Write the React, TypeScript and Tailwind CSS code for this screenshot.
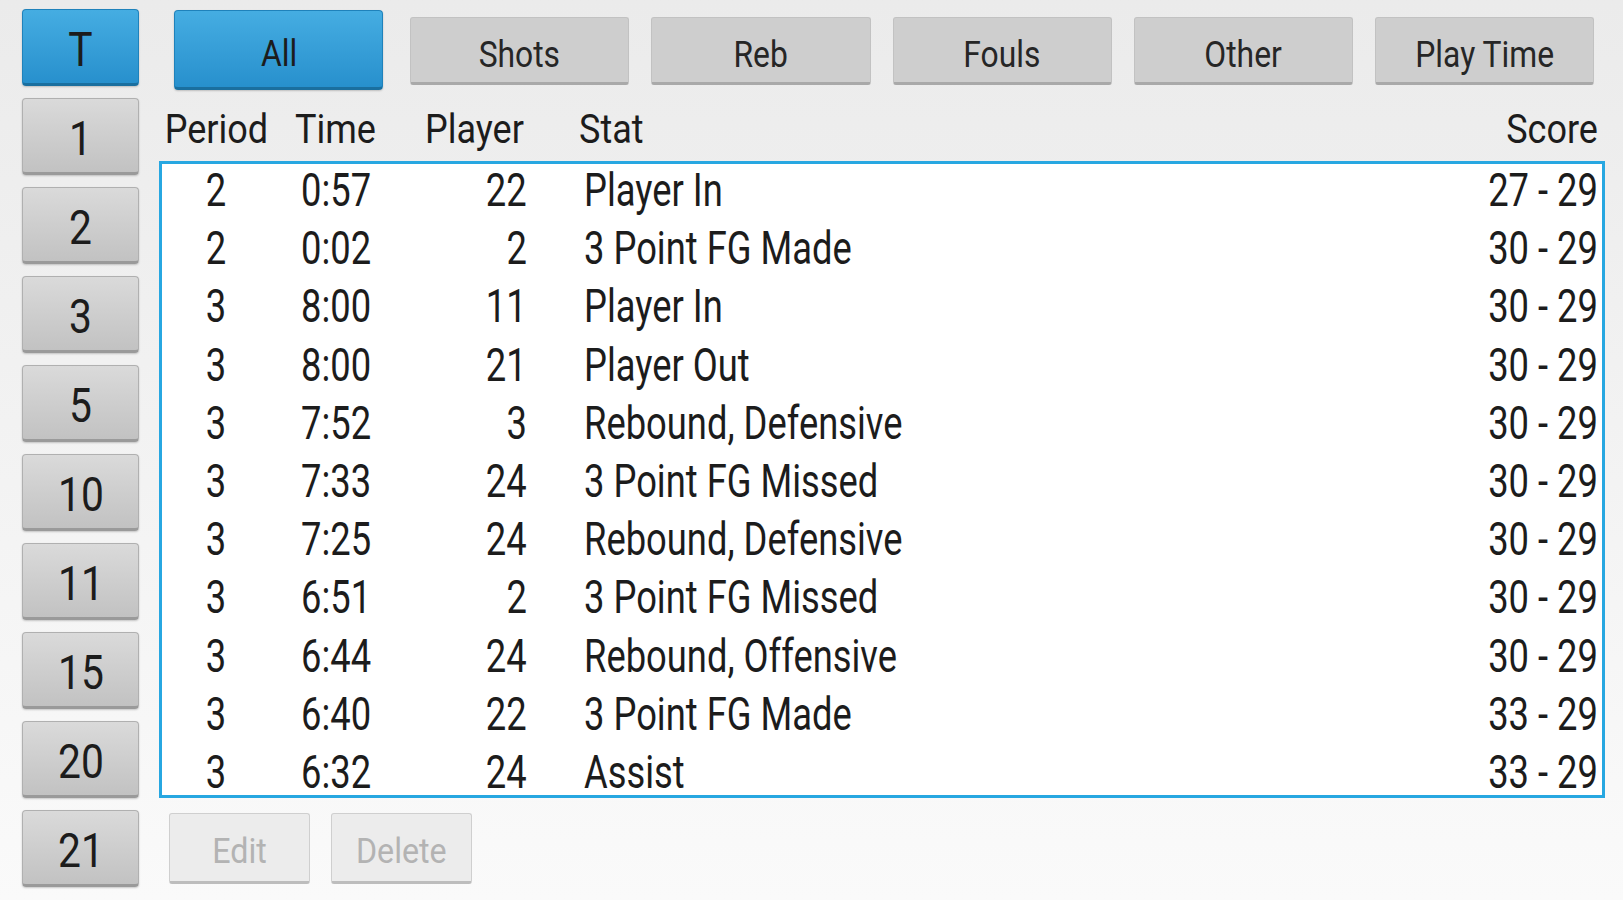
import React from 'react';

const players = ['T', '1', '2', '3', '5', '10', '11', '15', '20', '21'];
const tabs = ['All', 'Shots', 'Reb', 'Fouls', 'Other', 'Play Time'];

const rows = [
  { period: '2', time: '0:57', player: '22', stat: 'Player In', score: '27 - 29' },
  { period: '2', time: '0:02', player: '2', stat: '3 Point FG Made', score: '30 - 29' },
  { period: '3', time: '8:00', player: '11', stat: 'Player In', score: '30 - 29' },
  { period: '3', time: '8:00', player: '21', stat: 'Player Out', score: '30 - 29' },
  { period: '3', time: '7:52', player: '3', stat: 'Rebound, Defensive', score: '30 - 29' },
  { period: '3', time: '7:33', player: '24', stat: '3 Point FG Missed', score: '30 - 29' },
  { period: '3', time: '7:25', player: '24', stat: 'Rebound, Defensive', score: '30 - 29' },
  { period: '3', time: '6:51', player: '2', stat: '3 Point FG Missed', score: '30 - 29' },
  { period: '3', time: '6:44', player: '24', stat: 'Rebound, Offensive', score: '30 - 29' },
  { period: '3', time: '6:40', player: '22', stat: '3 Point FG Made', score: '33 - 29' },
  { period: '3', time: '6:32', player: '24', stat: 'Assist', score: '33 - 29' },
];

// android text is squeezed sideways in the capture
const Narrow = ({ children, className }: { children: React.ReactNode; className: string }) => (
  <span className={`inline-block whitespace-nowrap ${className}`}>{children}</span>
);

const cols = 'grid grid-cols-[108px_130px_127px_1fr_200px]';
const rowText = 'scale-x-[0.79]';
const headText = 'scale-x-[0.9]';

export default function App() {
  return (
    <div
      className="flex min-h-[900px] w-full bg-linear-to-b from-[#ebebeb] to-[#fafafa] text-[#1c1c1c]"
      style={{ fontFamily: 'Roboto, "Noto Sans", sans-serif' }}
    >
      <div className="ml-[22px] mt-[9px] flex w-[117px] flex-col gap-[12px]">
        {players.map((p, i) => (
          <button
            key={p}
            className={
              i === 0
                ? 'flex h-[77px] items-center justify-center rounded-[4px] border border-[#1f82bb] border-b-[3px] border-b-[#1a6f9f] bg-linear-to-b from-[#45ade2] to-[#2790cd] pt-[6px] text-[48px] leading-none shadow-[0_1px_2px_rgba(0,0,0,0.2)]'
                : 'flex h-[77px] items-center justify-center rounded-[4px] border border-[#b0b0b0] border-b-[3px] border-b-[#9a9a9a] bg-linear-to-b from-[#dadada] to-[#c2c2c2] pt-[6px] text-[48px] leading-none shadow-[0_1px_2px_rgba(0,0,0,0.2)]'
            }
          >
            <Narrow className="origin-center scale-x-[0.85]">{p}</Narrow>
          </button>
        ))}
      </div>

      <div className="ml-[19px] flex w-[1447px] flex-col">
        <div className="grid h-[90px] grid-cols-6 pt-[10px]">
          {tabs.map((t, i) =>
            i === 0 ? (
              <div key={t} className="px-[16px]">
                <button className="flex h-[80px] w-full items-center justify-center rounded-[4px] border border-[#1f82bb] border-b-[3px] border-b-[#1a6f9f] bg-linear-to-b from-[#45ade2] to-[#2790cd] pt-[9px] text-[37px] leading-none shadow-[0_1px_2px_rgba(0,0,0,0.2)]">
                  <Narrow className="origin-center scale-x-[0.86]">{t}</Narrow>
                </button>
              </div>
            ) : (
              <div key={t} className="px-[11px] pt-[7px]">
                <button className="flex h-[68px] w-full items-center justify-center rounded-[3px] border border-[#c2c2c2] border-b-[3px] border-b-[#a9a9a9] bg-[#cecece] pt-[9px] text-[37px] leading-none text-[#262626]">
                  <Narrow className="origin-center scale-x-[0.86]">{t}</Narrow>
                </button>
              </div>
            ),
          )}
        </div>

        <div className={`${cols} h-[71px] pl-[1px] pt-[15px] text-[40px] leading-[50px]`}>
          <div className="text-center">
            <Narrow className={`origin-center ${headText}`}>Period</Narrow>
          </div>
          <div className="pl-[28px]">
            <Narrow className={`origin-left ${headText}`}>Time</Narrow>
          </div>
          <div className="text-right">
            <Narrow className={`origin-right ${headText}`}>Player</Narrow>
          </div>
          <div className="pl-[55px]">
            <Narrow className={`origin-left ${headText}`}>Stat</Narrow>
          </div>
          <div className="pr-[7px] text-right">
            <Narrow className={`origin-right ${headText}`}>Score</Narrow>
          </div>
        </div>

        <div className="ml-[1px] h-[637px] overflow-hidden border-[3px] border-[#27a7e1] bg-white">
          {rows.map((r, i) => (
            <div key={i} className={`${cols} h-[58.2px] pt-[2px] text-[46px] leading-[48px]`}>
              <div className="text-center">
                <Narrow className={`origin-center ${rowText}`}>{r.period}</Narrow>
              </div>
              <div className="pl-[31px]">
                <Narrow className={`origin-left ${rowText}`}>{r.time}</Narrow>
              </div>
              <div className="text-right">
                <Narrow className={`origin-right ${rowText}`}>{r.player}</Narrow>
              </div>
              <div className="pl-[57px]">
                <Narrow className={`origin-left ${rowText}`}>{r.stat}</Narrow>
              </div>
              <div className="pr-[4px] text-right">
                <Narrow className={`origin-right ${rowText}`}>{r.score}</Narrow>
              </div>
            </div>
          ))}
        </div>

        <div className="mt-[15px] flex gap-[21px] pl-[11px]">
          {['Edit', 'Delete'].map((b) => (
            <button
              key={b}
              className="flex h-[71px] w-[141px] items-center justify-center rounded-[3px] border border-[#cfcfcf] border-b-[3px] border-b-[#bdbdbd] bg-[#ececec] pt-[8px] text-[35px] leading-none text-[#b3b3b3]"
            >
              <Narrow className="origin-center scale-x-[0.92]">{b}</Narrow>
            </button>
          ))}
        </div>
      </div>
    </div>
  );
}
